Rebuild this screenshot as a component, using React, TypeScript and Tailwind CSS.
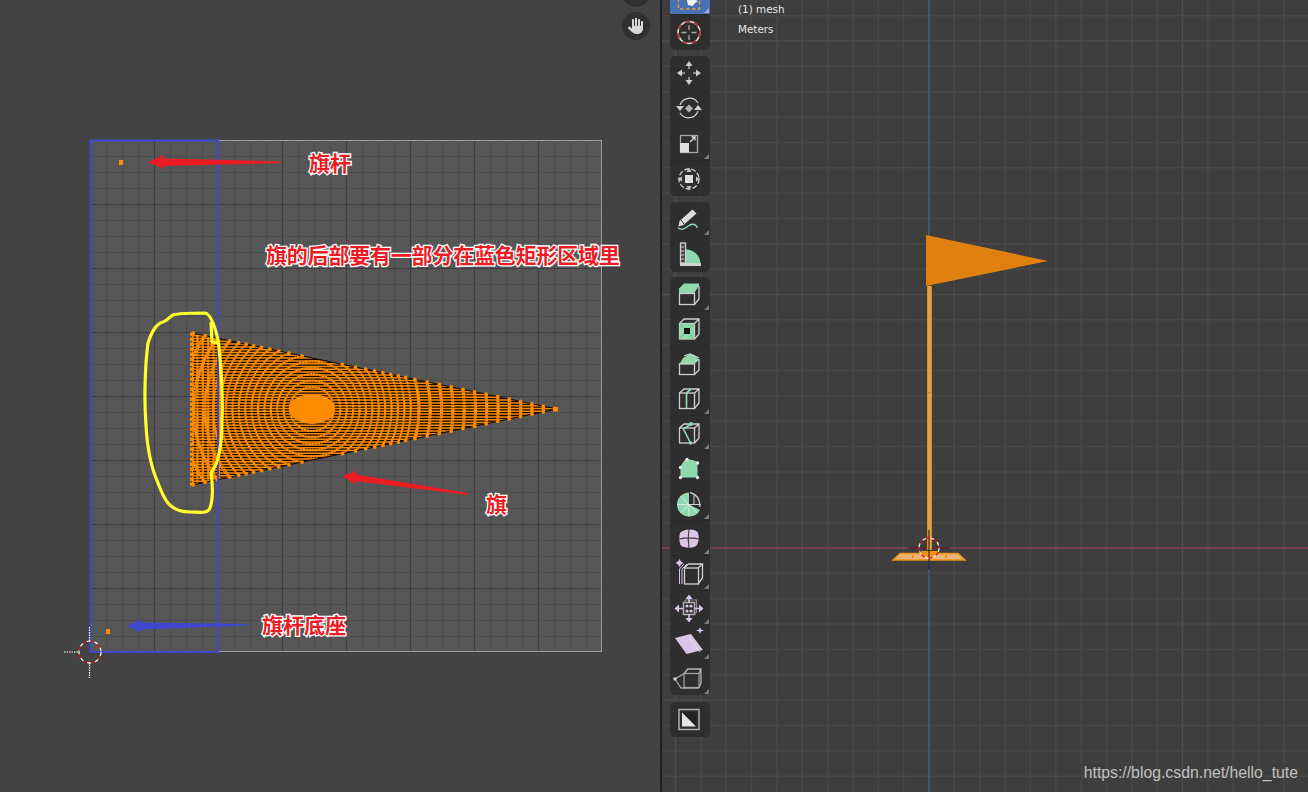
import React from "react";
import { FaHand } from "react-icons/fa6";
import { Search } from "lucide-react";

const G = "#8fd9b1";
const P = "#d8c5e8";
const W = "#cfcfcf";

function range(a: number, b: number, s: number) {
  const r: number[] = [];
  for (let v = a; v <= b + 0.001; v += s) r.push(v);
  return r;
}

const CX = 312;
const CY = 409;
const ringRadii = [...range(22, 100, 6.4), ...range(107, 245, 11.3)];

function edgeHits(r: number) {
  const m = 76 / 365;
  const at = (x: number) => 333 + (x - 192) * m - CY;
  const a = 1 + m * m;
  const k = 333 - CY - 192 * m;
  const b = -2 * CX + 2 * m * k;
  const c = CX * CX + k * k - r * r;
  const d = b * b - 4 * a * c;
  if (d < 0) return [] as [number, number][];
  const out: [number, number][] = [];
  for (const s of [-1, 1]) {
    const x = (-b + s * Math.sqrt(d)) / (2 * a);
    if (x >= 192 && x <= 557) {
      const dy = at(x);
      out.push([x, CY + dy], [x, CY - dy]);
    }
  }
  return out;
}

function LeftCanvas() {
  const xs = range(90, 602, 16);
  const ys = range(140, 652, 16);
  const rows = range(331.5, 487, 2.8);
  const cols = range(192, 222, 5.4);
  return (
    <svg width="660" height="792" viewBox="0 0 660 792" className="block">
      <defs>
        <clipPath id="flagClip">
          <polygon points="192,333 557,409 192,485" />
        </clipPath>
      </defs>
      <rect x="90" y="140" width="512" height="512" fill="#565656" />
      {xs.map((x, i) => (
        <line key={"x" + i} x1={x + 0.5} x2={x + 0.5} y1="140" y2="652" stroke={i % 4 === 0 ? "#3e3e3e" : "#4c4c4c"} strokeWidth="1" />
      ))}
      {ys.map((y, i) => (
        <line key={"y" + i} y1={y + 0.5} y2={y + 0.5} x1="90" x2="602" stroke={i % 4 === 0 ? "#3e3e3e" : "#4c4c4c"} strokeWidth="1" />
      ))}
      <rect x="90.5" y="140.5" width="511" height="511" fill="none" stroke="#a0a0a0" strokeWidth="1" />

      <polygon points="192,333 557,409 192,485" fill="#ff8c00" />
      <g clipPath="url(#flagClip)">
        {rows.map((y, i) => (
          <line key={i} x1="190" x2="560" y1={y} y2={y} stroke="#0c0800" strokeWidth="1.3" />
        ))}
        {ringRadii.map((r, i) => (
          <circle key={i} cx={CX} cy={CY} r={r} fill="none" stroke="#ff8c00" strokeWidth={r > 100 ? 3.2 : 2.2} strokeDasharray="2.6 0.5" />
        ))}
        {cols.map((x, i) => (
          <line key={i} x1={x} x2={x} y1="330" y2="490" stroke="#ff8c00" strokeWidth="2.2" strokeDasharray="2.4 0.6" />
        ))}
        <ellipse cx={CX} cy={CY} rx="23" ry="15" fill="#ff8c00" />
      </g>
      <polyline points="192,333 557,409 192,485" fill="none" stroke="#0c0800" strokeWidth="1" />
      {ringRadii.flatMap((r, i) =>
        edgeHits(r).map(([x, y], j) => <circle key={i + "-" + j} cx={x} cy={y} r="1.9" fill="#ff8c00" />)
      )}
      {range(334, 484, 5).map((y, i) => (
        <rect key={i} x="190" y={y - 1.5} width="4" height="3.4" fill="#ff8c00" />
      ))}
      <rect x="553" y="407" width="5" height="4.5" fill="#ff8c00" />

      <rect x="119" y="160" width="4" height="5" fill="#ff8c00" />
      <rect x="106" y="629" width="4" height="5" fill="#ff8c00" />

      <rect x="90.5" y="140.5" width="127.5" height="511.5" fill="none" stroke="#3f48cc" strokeWidth="2" />

      <path
        d="M211 322 L212 342 L218 343 M173 315 C180 313 196 313 205 313 C210 314 214 322 218 340 C221 360 223 400 222 420 C222 445 219 463 211 473 C213 485 213 500 210 508 C207 514 200 512 190 512 C182 512 174 510 168 503 C162 495 160 488 158 483 C150 465 147 445 146 425 C144 400 145 365 148 343 C152 330 158 323 163 322 C167 321 169 317 173 315 Z"
        fill="none"
        stroke="#ffff2e"
        strokeWidth="3.2"
        strokeLinejoin="round"
      />

      <polygon points="148,162 164,155 163,158.5 281,161.5 281,163 163,166 164,169" fill="#ed1c24" />
      <polygon points="342,476 357,471 356,474.5 468,493 468,495 355,481 356,485" fill="#ed1c24" />
      <polygon points="127,626 141,619 141,622.5 248,624 248,625.5 141,629.5 141,633" fill="#3f48cc" />

      <g fill="none" strokeWidth="1.2">
        <circle cx="90" cy="652" r="11" stroke="#ffffff" strokeDasharray="4 4" />
        <circle cx="90" cy="652" r="11" stroke="#e01010" strokeDasharray="4 4" strokeDashoffset="4" />
        <g stroke="#ffffff" strokeDasharray="1.5 1">
          <line x1="64" x2="79" y1="652" y2="652" />
          <line x1="89.5" x2="89.5" y1="627" y2="642" />
          <line x1="89.5" x2="89.5" y1="662" y2="678" />
        </g>
      </g>
    </svg>
  );
}

function RightCanvas() {
  const W0 = 646;
  const cx = 929 - 662;
  const cy = 548;
  const s = 25.35;
  const xs: number[] = [];
  for (let k = -11; k <= 16; k++) xs.push(k);
  const ys: number[] = [];
  for (let k = -22; k <= 10; k++) ys.push(k);
  const ox = (v: number) => v - 662;
  return (
    <svg width={W0} height="792" viewBox={`0 0 ${W0} 792`} className="block">
      {xs.map((k) => (
        <line key={"x" + k} x1={cx + k * s} x2={cx + k * s} y1="0" y2="792" stroke={k % 10 === 0 ? "#4e4e4e" : "#484848"} strokeWidth="1.5" />
      ))}
      {ys.map((k) => (
        <line key={"y" + k} y1={cy + k * s} y2={cy + k * s} x1="0" x2={W0} stroke={k % 10 === 0 ? "#4e4e4e" : "#484848"} strokeWidth="1.5" />
      ))}
      <line x1={cx} x2={cx} y1="0" y2="792" stroke="#46628c" strokeWidth="1" />
      <line y1={cy} y2={cy} x1="0" x2={W0} stroke="#8b3a4c" strokeWidth="1.4" />
      <line y1={cy} y2={cy} x1={ox(908)} x2={ox(950)} stroke="#3a1a1c" strokeWidth="1.2" />

      <rect x={ox(927)} y="286" width="5" height="264" fill="#e0a050" />
      <rect x={ox(927)} y="286" width="1" height="264" fill="#e08a1a" />
      <rect x={ox(931)} y="286" width="1" height="264" fill="#e08a1a" />
      <rect x={ox(927)} y="392" width="5" height="2" fill="#d08a30" />
      <polygon points={`${ox(926)},235 ${ox(1048)},261 ${ox(926)},286`} fill="#e0800e" />

      <polygon points={`${ox(893)},560 ${ox(900)},553.5 ${ox(958)},553.5 ${ox(965)},560`} fill="#e8b47c" stroke="#ee9214" strokeWidth="1.4" />
      <rect x={ox(912)} y="555" width="2" height="3" fill="#ee9214" />
      <rect x={ox(945)} y="555" width="2" height="3" fill="#ee9214" />
      <polygon points={`${ox(921)},551 ${ox(938)},551 ${ox(936)},557 ${ox(923)},557`} fill="#f09010" />
      <line x1={cx} x2={cx} y1="530" y2="570" stroke="#141414" strokeWidth="1" />
      <g fill="none" strokeWidth="1.3">
        <circle cx={cx} cy={cy} r="10" stroke="#e8e8e8" strokeDasharray="4 4" />
        <circle cx={cx} cy={cy} r="10" stroke="#d81818" strokeDasharray="4 4" strokeDashoffset="4" />
      </g>
    </svg>
  );
}

function Tool({ children, corner, active, last }: { children: React.ReactNode; corner?: boolean; active?: boolean; last?: boolean }) {
  return (
    <div className={`h-[34.9px] w-[40px] ${active ? "bg-[#4772b3]" : ""} ${last ? "" : "border-b border-[#2a2a2a]"}`}>
      <svg width="40" height="35" viewBox="0 0 40 35" className="block" fill="none">
        {children}
        {corner && <polygon points="39,28 39,33 34,33" fill={active ? "#9db5d8" : "#7c7c7c"} />}
      </svg>
    </div>
  );
}

function Group({ children }: { children: React.ReactNode }) {
  return <div className="flex flex-col overflow-hidden rounded-[5px] bg-[#2e2e2e]">{children}</div>;
}

function Toolbar() {
  return (
    <div className="flex w-[40px] flex-col">
      <div className="-mt-[20px]">
        <Group>
          <Tool active corner>
            <rect x="8.5" y="6" width="21" height="23" stroke="#f0a030" strokeWidth="1.3" strokeDasharray="3.5 2.5" />
            <path d="M16 16 L28 21 L24 24 L23 26 L18 25 Z" fill="#f2f2f2" />
          </Tool>
          <Tool last>
            <circle cx="19" cy="17.5" r="11" stroke="#d8d8d8" strokeWidth="1.6" />
            <circle cx="19" cy="17.5" r="11" stroke="#b03030" strokeWidth="1.7" strokeDasharray="5 4.5" />
            <path d="M19 10v5M19 20v5M11.5 17.5h5M21.5 17.5h5" stroke="#a8a8a8" strokeWidth="1.3" />
          </Tool>
        </Group>
      </div>
      <div className="mt-[6.6px]">
        <Group>
          <Tool>
            <g fill={W}>
              <polygon points="19,5 15.5,10 22.5,10" />
              <polygon points="19,29 15.5,24 22.5,24" />
              <polygon points="7,17 12,13.5 12,20.5" />
              <polygon points="31,17 26,13.5 26,20.5" />
            </g>
            <path d="M19 10v3M19 21v3M12 17h3M23 17h3" stroke="#a8a8a8" strokeWidth="1.6" />
          </Tool>
          <Tool>
            <path d="M10 14 A10 10 0 0 1 28 12 M28 20 A10 10 0 0 1 10 22" stroke={W} strokeWidth="1.3" />
            <polygon points="6,15 14,15 10,20" fill={W} />
            <polygon points="24,19 32,19 28,14" fill={W} />
            <polygon points="19,13.5 23,17.5 19,21.5 15,17.5" fill="#b4b4b4" />
          </Tool>
          <Tool corner>
            <rect x="10.5" y="9.5" width="17" height="17" stroke="#a8a8a8" strokeWidth="1.3" />
            <rect x="10" y="17" width="9" height="9.5" fill="#dedede" />
            <path d="M20 16 L25 11 M21.5 11 H25 V14.5" stroke="#dedede" strokeWidth="1.3" />
          </Tool>
          <Tool last>
            <circle cx="19" cy="18" r="10" stroke={W} strokeWidth="1.3" strokeDasharray="5 2" />
            <rect x="15" y="14" width="8" height="8" fill="#dedede" />
            <g fill="#c0c0c0">
              <polygon points="19,6.5 16.5,11 21.5,11" />
              <polygon points="19,29.5 16.5,25 21.5,25" />
              <polygon points="7.5,18 12,15.5 12,20.5" />
              <polygon points="30.5,18 26,15.5 26,20.5" />
            </g>
          </Tool>
        </Group>
      </div>
      <div className="mt-[6px]">
        <Group>
          <Tool corner>
            <path d="M9.5 19 L22.5 7.5 L26.5 11.5 L13.5 23 L8.5 24.5 Z" fill="#dcdcdc" />
            <path d="M11 18 L14 22" stroke="#2e2e2e" strokeWidth="1" />
            <path d="M8 26 C13 29 15 26 20 23 C24 21 26 23 27.5 26" stroke={G} strokeWidth="1.4" />
          </Tool>
          <Tool last>
            <path d="M16 27 V12.5 C24 12.5 30.5 19 30.5 27 Z" fill={G} />
            <rect x="10.5" y="6" width="5" height="20" stroke="#d0d0d0" strokeWidth="1.3" fill="#444" />
            <rect x="10" y="26" width="21" height="3" fill="#d0d0d0" />
            <path d="M11 10h3M11 14h3M11 18h3M11 22h3" stroke="#d0d0d0" strokeWidth="1" />
          </Tool>
        </Group>
      </div>
      <div className="mt-[5px]">
        <Group>
          <Tool corner>
            <polygon points="9,11.5 14,6.5 29,6.5 29,8.5 24,16.5 9,16.5" fill={G} />
            <rect x="9.5" y="16.5" width="15" height="11" stroke={W} strokeWidth="1.3" />
            <path d="M29 9 V22 L24.5 27.5" stroke={W} strokeWidth="1.3" />
          </Tool>
          <Tool>
            <rect x="9.5" y="11.5" width="15" height="15.5" stroke={W} strokeWidth="1.3" />
            <path d="M9.5 11.5 L14 7 H29 V22 L24.5 27 M24.5 11.5 L29 7" stroke={W} strokeWidth="1.3" />
            <polygon points="9.5,11.5 24.5,11.5 20,16 14,16" fill={G} />
            <polygon points="9.5,27 24.5,27 20,22 14,22" fill={G} />
            <polygon points="9.5,11.5 14,16 14,22 9.5,27" fill={G} />
            <polygon points="24.5,11.5 20,16 20,22 24.5,27" fill={G} />
            <rect x="14" y="16" width="6" height="6" fill="#141414" />
          </Tool>
          <Tool>
            <polygon points="9.5,17 13,11 20,7 24,8 29,13 24.5,17" fill={G} />
            <path d="M14 9 L20 7 L29 11" stroke={W} strokeWidth="1.3" />
            <rect x="9.5" y="17" width="15" height="10.5" stroke={W} strokeWidth="1.3" />
            <path d="M29 12 V23 L24.5 27.5" stroke={W} strokeWidth="1.3" />
          </Tool>
          <Tool corner>
            <rect x="9.5" y="12" width="15" height="15.5" stroke={W} strokeWidth="1.3" />
            <path d="M9.5 12 L14 8 H29 V22 L24.5 27.5 M24.5 12 L29 8" stroke={W} strokeWidth="1.3" />
            <path d="M16.5 27.5 V12 L21 8" stroke={G} strokeWidth="1.7" />
          </Tool>
          <Tool corner>
            <rect x="9.5" y="12" width="15" height="15" stroke={W} strokeWidth="1.3" />
            <path d="M9.5 12 L14 8 H29 V22 L24.5 27 M24.5 12 L29 8" stroke={W} strokeWidth="1.3" />
            <path d="M21 8 L13.5 13 L20.5 27" stroke={G} strokeWidth="1.6" />
            <circle cx="21" cy="8" r="1.9" fill={G} />
            <circle cx="20.5" cy="27" r="1.7" fill={G} />
          </Tool>
          <Tool>
            <path d="M10.5 16.5 C12 12 14 9 17 8.5 C22 8.5 27 10 27.5 12 L27.5 26.5 L10.5 26.5 Z" fill={G} />
            {[
              [17, 8.5],
              [27.5, 12],
              [27.5, 26.5],
              [10.5, 26.5],
              [10.5, 16.5],
            ].map(([x, y], i) => (
              <circle key={i} cx={x} cy={y} r="1.7" fill="#e8e8e8" />
            ))}
          </Tool>
          <Tool corner>
            <path d="M19 18.5 L19 6.5 A12 12 0 0 0 7 18.5 A12 12 0 0 0 19 30.5 A12 12 0 0 0 30 24 Z" fill={G} />
            <path d="M7 18.5H31M19 18.5V30.5M10.5 10L27.5 27M10.5 27L19 18.5" stroke="#e8e8e8" strokeWidth="0.9" />
            <path d="M20 6.5 C26 8 30 13 30 21" stroke={W} strokeWidth="1.3" />
            <path d="M24 9 L24 19" stroke={W} strokeWidth="1" />
          </Tool>
          <Tool corner>
            <path d="M10 12 C13 8 24 7 27.5 11 C29.5 15 29 22 26 25 C22 28 13 27 10.5 24 C9 20 9 15 10 12 Z" fill={P} />
            <path d="M9.5 18 C15 16.5 22 16.5 29 18 M19 8 C18 14 18 21 19 27" stroke="#3c3c3c" strokeWidth="1.1" />
          </Tool>
          <Tool corner>
            <polygon points="8,5.5 9.5,3 11,5.5 13.5,7 11,8.5 9.5,11 8,8.5 5.5,7" fill={P} />
            <rect x="14.5" y="12" width="14" height="16" stroke={W} strokeWidth="1.3" />
            <path d="M14 12 L18.5 8 H32.5 V22 L28 28 M28 12 L32.5 8" stroke={W} strokeWidth="1.3" />
            <path d="M9.5 28 V13 L14 8 M12 28 V13 L17 8" stroke={P} strokeWidth="1" />
          </Tool>
          <Tool corner>
            <rect x="13.5" y="11.5" width="11" height="12" stroke="#b0b0b0" strokeWidth="1.5" />
            <path d="M13.5 11.5 L16 9 H26.5 V21 L24.5 23.5" stroke="#8a8a8a" strokeWidth="1.2" />
            <g fill={P}>
              <polygon points="19,3.5 15.5,8 22.5,8" />
              <polygon points="19,31.5 15.5,27 22.5,27" />
              <polygon points="4.5,17.5 9,13.5 9,21.5" />
              <polygon points="33.5,17.5 29,13.5 29,21.5" />
              <circle cx="17" cy="15" r="1.6" />
              <circle cx="21" cy="15" r="1.6" />
              <circle cx="17" cy="20" r="1.6" />
              <circle cx="21" cy="20" r="1.6" />
              <path d="M19 8v4M19 23v4M9 17.5h4M25 17.5h4" stroke={P} strokeWidth="1.6" />
            </g>
          </Tool>
          <Tool corner>
            <polygon points="5,12 20.5,8 32.5,24 16.5,28" fill={P} />
            <path d="M20.5 8 L32.5 24 M19 11 L30 26" stroke="#e8e0ee" strokeWidth="0.8" />
            <polygon points="30,1 31,3.5 34,4.5 31,5.5 30,8 29,5.5 26,4.5 29,3.5" fill={P} />
          </Tool>
          <Tool corner last>
            <rect x="14" y="12.5" width="15" height="14" stroke="#9c9c9c" strokeWidth="1.3" />
            <path d="M14 12.5 L18 8 H31 V22 L29 26.5 M29 12.5 L31 8" stroke="#b4b4b4" strokeWidth="1.3" />
            <path d="M5 18 L14 12.5 M5 18 L11 27 H29" stroke="#a8a8a8" strokeWidth="1.3" />
            <circle cx="5" cy="18" r="1.8" fill={P} />
          </Tool>
        </Group>
      </div>
      <div className="mt-[7px]">
        <Group>
          <Tool last>
            <rect x="9" y="7.5" width="20" height="20" stroke="#b8b8b8" strokeWidth="1.4" />
            <rect x="11.5" y="10" width="15" height="15" fill="#222222" />
            <polygon points="12,10.5 26,24.5 12,24.5" fill="#e4e4e4" />
          </Tool>
        </Group>
      </div>
    </div>
  );
}

function Label({ children, className }: { children: React.ReactNode; className: string }) {
  return (
    <div
      className={`absolute whitespace-nowrap text-[21px] font-bold leading-[24px] text-[#ed1c24] [-webkit-text-stroke:2.6px_#ffffff] [paint-order:stroke_fill] [font-family:'Noto_Sans_CJK_SC',sans-serif] ${className}`}
    >
      {children}
    </div>
  );
}

export default function App() {
  return (
    <div className="flex h-[792px] w-[1308px] overflow-hidden bg-[#434343] [font-family:'Liberation_Sans','Noto_Sans_CJK_SC',sans-serif]">
      <div className="relative h-full w-[660px] shrink-0 bg-[#434343]">
        <LeftCanvas />
        <Label className="left-[309px] top-[150px]">旗杆</Label>
        <Label className="left-[266px] top-[242px] tracking-[-0.2px]">旗的后部要有一部分在蓝色矩形区域里</Label>
        <Label className="left-[486px] top-[491px]">旗</Label>
        <Label className="left-[262px] top-[612px]">旗杆底座</Label>
        <div className="absolute left-[622px] top-[-21px] flex h-[28px] w-[28px] items-center justify-center rounded-full bg-[#303030]">
          <Search size={16} color="#d8d8d8" strokeWidth={2.5} />
        </div>
        <div className="absolute left-[622px] top-[12px] flex h-[28px] w-[28px] items-center justify-center rounded-full bg-[#303030]">
          <FaHand size={16} color="#d8d8d8" />
        </div>
      </div>
      <div className="h-full w-[2px] shrink-0 bg-[#1f1f1f]" />
      <div className="relative h-full flex-1 bg-[#3e3e3e]">
        <RightCanvas />
        <div className="absolute left-[8px] top-0">
          <Toolbar />
        </div>
        <div className="absolute left-[76px] top-0 flex flex-col gap-[7px] pt-[3px] text-[10.4px] leading-[13px] text-[#e6e6e6] [font-family:'DejaVu_Sans',sans-serif]">
          <span>(1) mesh</span>
          <span>Meters</span>
        </div>
        <div className="absolute bottom-[10px] right-[10px] text-[15.8px] leading-[18px] text-[#c0c0c0] [font-family:'Liberation_Sans',sans-serif]">
          https://blog.csdn.net/hello_tute
        </div>
      </div>
    </div>
  );
}
